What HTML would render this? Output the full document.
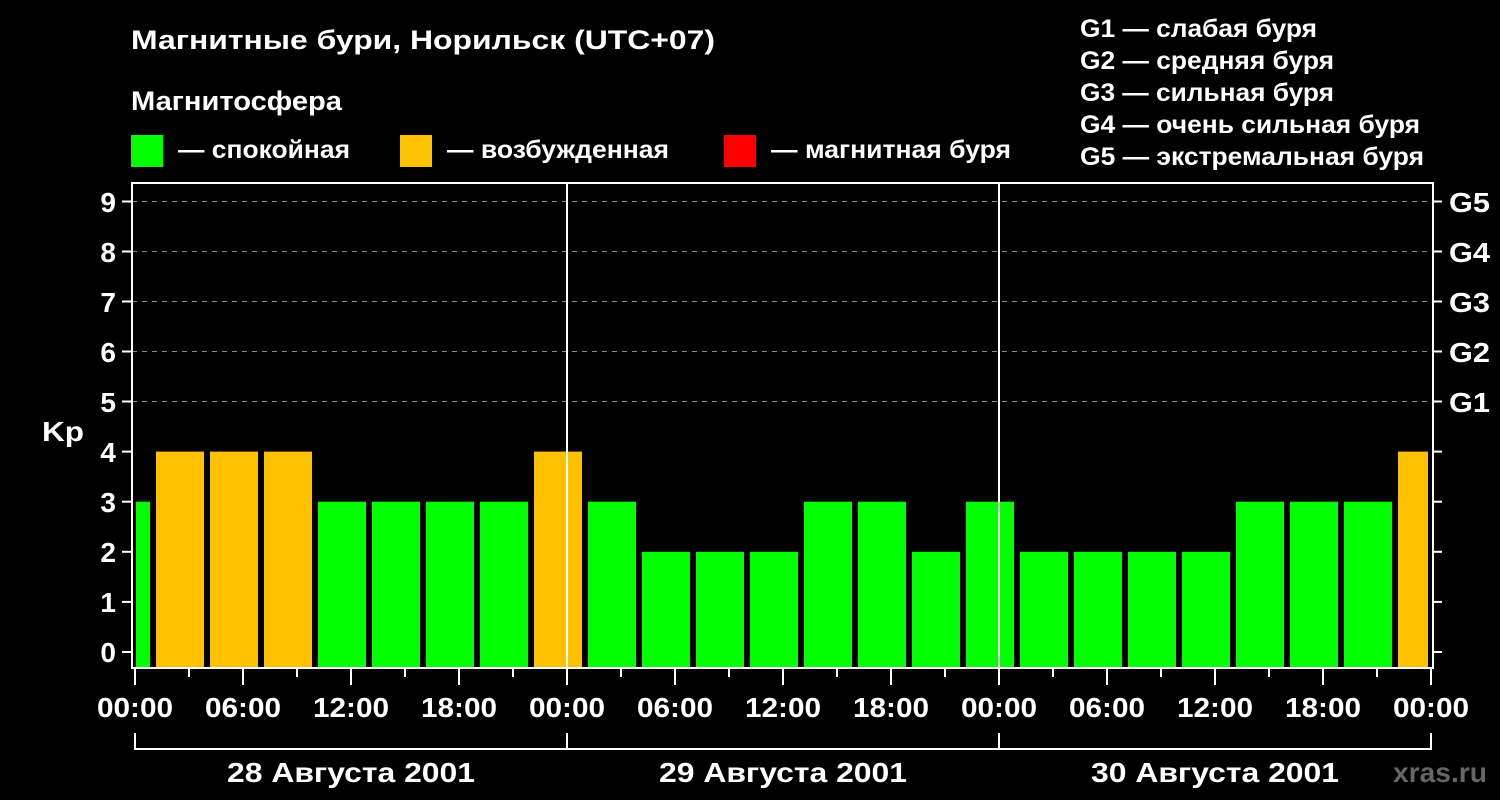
<!DOCTYPE html>
<html><head><meta charset="utf-8"><style>
html,body{margin:0;padding:0;background:#000;}
svg{display:block;font-family:"Liberation Sans",Arial,sans-serif;font-weight:bold;}
</style></head><body>
<svg width="1500" height="800" viewBox="0 0 1500 800" xmlns="http://www.w3.org/2000/svg">
<rect width="1500" height="800" fill="#000"/>
<g fill="#fff" font-size="27">
<text x="131" y="49" textLength="584" lengthAdjust="spacingAndGlyphs">Магнитные бури, Норильск (UTC+07)</text>
<text x="131" y="110" textLength="211" lengthAdjust="spacingAndGlyphs">Магнитосфера</text>
</g>
<rect x="131" y="135" width="32" height="32" fill="#00ff00"/>
<rect x="400" y="135" width="32" height="32" fill="#ffc000"/>
<rect x="724" y="135" width="32" height="32" fill="#ff0000"/>
<g fill="#fff" font-size="25" lengthAdjust="spacingAndGlyphs">
<text x="178" y="158" textLength="172" lengthAdjust="spacingAndGlyphs">— спокойная</text>
<text x="447" y="158" textLength="222" lengthAdjust="spacingAndGlyphs">— возбужденная</text>
<text x="771" y="158" textLength="240" lengthAdjust="spacingAndGlyphs">— магнитная буря</text>
<text x="1080" y="37" textLength="237" lengthAdjust="spacingAndGlyphs">G1 — слабая буря</text>
<text x="1080" y="69" textLength="254" lengthAdjust="spacingAndGlyphs">G2 — средняя буря</text>
<text x="1080" y="101" textLength="254" lengthAdjust="spacingAndGlyphs">G3 — сильная буря</text>
<text x="1080" y="133" textLength="340" lengthAdjust="spacingAndGlyphs">G4 — очень сильная буря</text>
<text x="1080" y="165" textLength="344" lengthAdjust="spacingAndGlyphs">G5 — экстремальная буря</text>
</g>
<g stroke="#888" stroke-width="1" stroke-dasharray="5,5">
<line x1="132" y1="201.5" x2="1432" y2="201.5"/>
<line x1="132" y1="251.5" x2="1432" y2="251.5"/>
<line x1="132" y1="301.5" x2="1432" y2="301.5"/>
<line x1="132" y1="351.5" x2="1432" y2="351.5"/>
<line x1="132" y1="401.5" x2="1432" y2="401.5"/>
</g>
<g>
<rect x="136" y="501.7" width="14" height="165.3" fill="#00ff00"/>
<rect x="156" y="451.6" width="48" height="215.4" fill="#ffc000"/>
<rect x="210" y="451.6" width="48" height="215.4" fill="#ffc000"/>
<rect x="264" y="451.6" width="48" height="215.4" fill="#ffc000"/>
<rect x="318" y="501.7" width="48" height="165.3" fill="#00ff00"/>
<rect x="372" y="501.7" width="48" height="165.3" fill="#00ff00"/>
<rect x="426" y="501.7" width="48" height="165.3" fill="#00ff00"/>
<rect x="480" y="501.7" width="48" height="165.3" fill="#00ff00"/>
<rect x="534" y="451.6" width="48" height="215.4" fill="#ffc000"/>
<rect x="588" y="501.7" width="48" height="165.3" fill="#00ff00"/>
<rect x="642" y="551.8" width="48" height="115.2" fill="#00ff00"/>
<rect x="696" y="551.8" width="48" height="115.2" fill="#00ff00"/>
<rect x="750" y="551.8" width="48" height="115.2" fill="#00ff00"/>
<rect x="804" y="501.7" width="48" height="165.3" fill="#00ff00"/>
<rect x="858" y="501.7" width="48" height="165.3" fill="#00ff00"/>
<rect x="912" y="551.8" width="48" height="115.2" fill="#00ff00"/>
<rect x="966" y="501.7" width="48" height="165.3" fill="#00ff00"/>
<rect x="1020" y="551.8" width="48" height="115.2" fill="#00ff00"/>
<rect x="1074" y="551.8" width="48" height="115.2" fill="#00ff00"/>
<rect x="1128" y="551.8" width="48" height="115.2" fill="#00ff00"/>
<rect x="1182" y="551.8" width="48" height="115.2" fill="#00ff00"/>
<rect x="1236" y="501.7" width="48" height="165.3" fill="#00ff00"/>
<rect x="1290" y="501.7" width="48" height="165.3" fill="#00ff00"/>
<rect x="1344" y="501.7" width="48" height="165.3" fill="#00ff00"/>
<rect x="1398" y="451.6" width="30" height="215.4" fill="#ffc000"/>
</g>
<g stroke="#fff" stroke-width="2" fill="none">
<rect x="132" y="183" width="1301" height="485"/>
<line x1="567" y1="183" x2="567" y2="668"/>
<line x1="999" y1="183" x2="999" y2="668"/>
</g>
<g stroke="#fff" stroke-width="2">
<line x1="122" y1="201.5" x2="132" y2="201.5"/><line x1="1433" y1="201.5" x2="1442" y2="201.5"/>
<line x1="122" y1="251.5" x2="132" y2="251.5"/><line x1="1433" y1="251.5" x2="1442" y2="251.5"/>
<line x1="122" y1="301.5" x2="132" y2="301.5"/><line x1="1433" y1="301.5" x2="1442" y2="301.5"/>
<line x1="122" y1="351.5" x2="132" y2="351.5"/><line x1="1433" y1="351.5" x2="1442" y2="351.5"/>
<line x1="122" y1="401.5" x2="132" y2="401.5"/><line x1="1433" y1="401.5" x2="1442" y2="401.5"/>
<line x1="122" y1="451.6" x2="132" y2="451.6"/><line x1="1433" y1="451.6" x2="1442" y2="451.6"/>
<line x1="122" y1="501.7" x2="132" y2="501.7"/><line x1="1433" y1="501.7" x2="1442" y2="501.7"/>
<line x1="122" y1="551.8" x2="132" y2="551.8"/><line x1="1433" y1="551.8" x2="1442" y2="551.8"/>
<line x1="122" y1="601.9" x2="132" y2="601.9"/><line x1="1433" y1="601.9" x2="1442" y2="601.9"/>
<line x1="122" y1="652" x2="132" y2="652"/><line x1="1433" y1="652" x2="1442" y2="652"/>
</g>
<g fill="#fff" font-size="28" text-anchor="end">
<text x="116" y="212">9</text><text x="116" y="262">8</text><text x="116" y="312">7</text>
<text x="116" y="362">6</text><text x="116" y="412">5</text><text x="116" y="462">4</text>
<text x="116" y="512">3</text><text x="116" y="562">2</text><text x="116" y="612">1</text>
<text x="116" y="662">0</text>
</g>
<text x="42" y="441" fill="#fff" font-size="28" textLength="42" lengthAdjust="spacingAndGlyphs">Kp</text>
<g fill="#fff" font-size="28">
<text x="1449" y="212" textLength="41" lengthAdjust="spacingAndGlyphs">G5</text>
<text x="1449" y="262" textLength="41" lengthAdjust="spacingAndGlyphs">G4</text>
<text x="1449" y="312" textLength="41" lengthAdjust="spacingAndGlyphs">G3</text>
<text x="1449" y="362" textLength="41" lengthAdjust="spacingAndGlyphs">G2</text>
<text x="1449" y="412" textLength="41" lengthAdjust="spacingAndGlyphs">G1</text>
</g>
<g stroke="#fff" stroke-width="2">
<line x1="135" y1="669" x2="135" y2="685"/><line x1="189" y1="669" x2="189" y2="677"/>
<line x1="243" y1="669" x2="243" y2="685"/><line x1="297" y1="669" x2="297" y2="677"/>
<line x1="351" y1="669" x2="351" y2="685"/><line x1="405" y1="669" x2="405" y2="677"/>
<line x1="459" y1="669" x2="459" y2="685"/><line x1="513" y1="669" x2="513" y2="677"/>
<line x1="567" y1="669" x2="567" y2="685"/><line x1="621" y1="669" x2="621" y2="677"/>
<line x1="675" y1="669" x2="675" y2="685"/><line x1="729" y1="669" x2="729" y2="677"/>
<line x1="783" y1="669" x2="783" y2="685"/><line x1="837" y1="669" x2="837" y2="677"/>
<line x1="891" y1="669" x2="891" y2="685"/><line x1="945" y1="669" x2="945" y2="677"/>
<line x1="999" y1="669" x2="999" y2="685"/><line x1="1053" y1="669" x2="1053" y2="677"/>
<line x1="1107" y1="669" x2="1107" y2="685"/><line x1="1161" y1="669" x2="1161" y2="677"/>
<line x1="1215" y1="669" x2="1215" y2="685"/><line x1="1269" y1="669" x2="1269" y2="677"/>
<line x1="1323" y1="669" x2="1323" y2="685"/><line x1="1377" y1="669" x2="1377" y2="677"/>
<line x1="1431" y1="669" x2="1431" y2="685"/>
<polyline fill="none" points="135,733 135,749 1431,749 1431,733"/>
<line x1="567" y1="733" x2="567" y2="749"/>
<line x1="999" y1="733" x2="999" y2="749"/>
</g>
<g fill="#fff" font-size="28" text-anchor="middle">
<text x="135" y="717" textLength="76" lengthAdjust="spacingAndGlyphs">00:00</text>
<text x="243" y="717" textLength="76" lengthAdjust="spacingAndGlyphs">06:00</text>
<text x="351" y="717" textLength="76" lengthAdjust="spacingAndGlyphs">12:00</text>
<text x="459" y="717" textLength="76" lengthAdjust="spacingAndGlyphs">18:00</text>
<text x="567" y="717" textLength="76" lengthAdjust="spacingAndGlyphs">00:00</text>
<text x="675" y="717" textLength="76" lengthAdjust="spacingAndGlyphs">06:00</text>
<text x="783" y="717" textLength="76" lengthAdjust="spacingAndGlyphs">12:00</text>
<text x="891" y="717" textLength="76" lengthAdjust="spacingAndGlyphs">18:00</text>
<text x="999" y="717" textLength="76" lengthAdjust="spacingAndGlyphs">00:00</text>
<text x="1107" y="717" textLength="76" lengthAdjust="spacingAndGlyphs">06:00</text>
<text x="1215" y="717" textLength="76" lengthAdjust="spacingAndGlyphs">12:00</text>
<text x="1323" y="717" textLength="76" lengthAdjust="spacingAndGlyphs">18:00</text>
<text x="1431" y="717" textLength="76" lengthAdjust="spacingAndGlyphs">00:00</text>
<text x="351" y="782" textLength="248" lengthAdjust="spacingAndGlyphs">28 Августа 2001</text>
<text x="783" y="782" textLength="248" lengthAdjust="spacingAndGlyphs">29 Августа 2001</text>
<text x="1215" y="782" textLength="248" lengthAdjust="spacingAndGlyphs">30 Августа 2001</text>
</g>
<text x="1393" y="782" fill="#666" font-size="28" textLength="94" lengthAdjust="spacingAndGlyphs">xras.ru</text>
</svg>
</body></html>
